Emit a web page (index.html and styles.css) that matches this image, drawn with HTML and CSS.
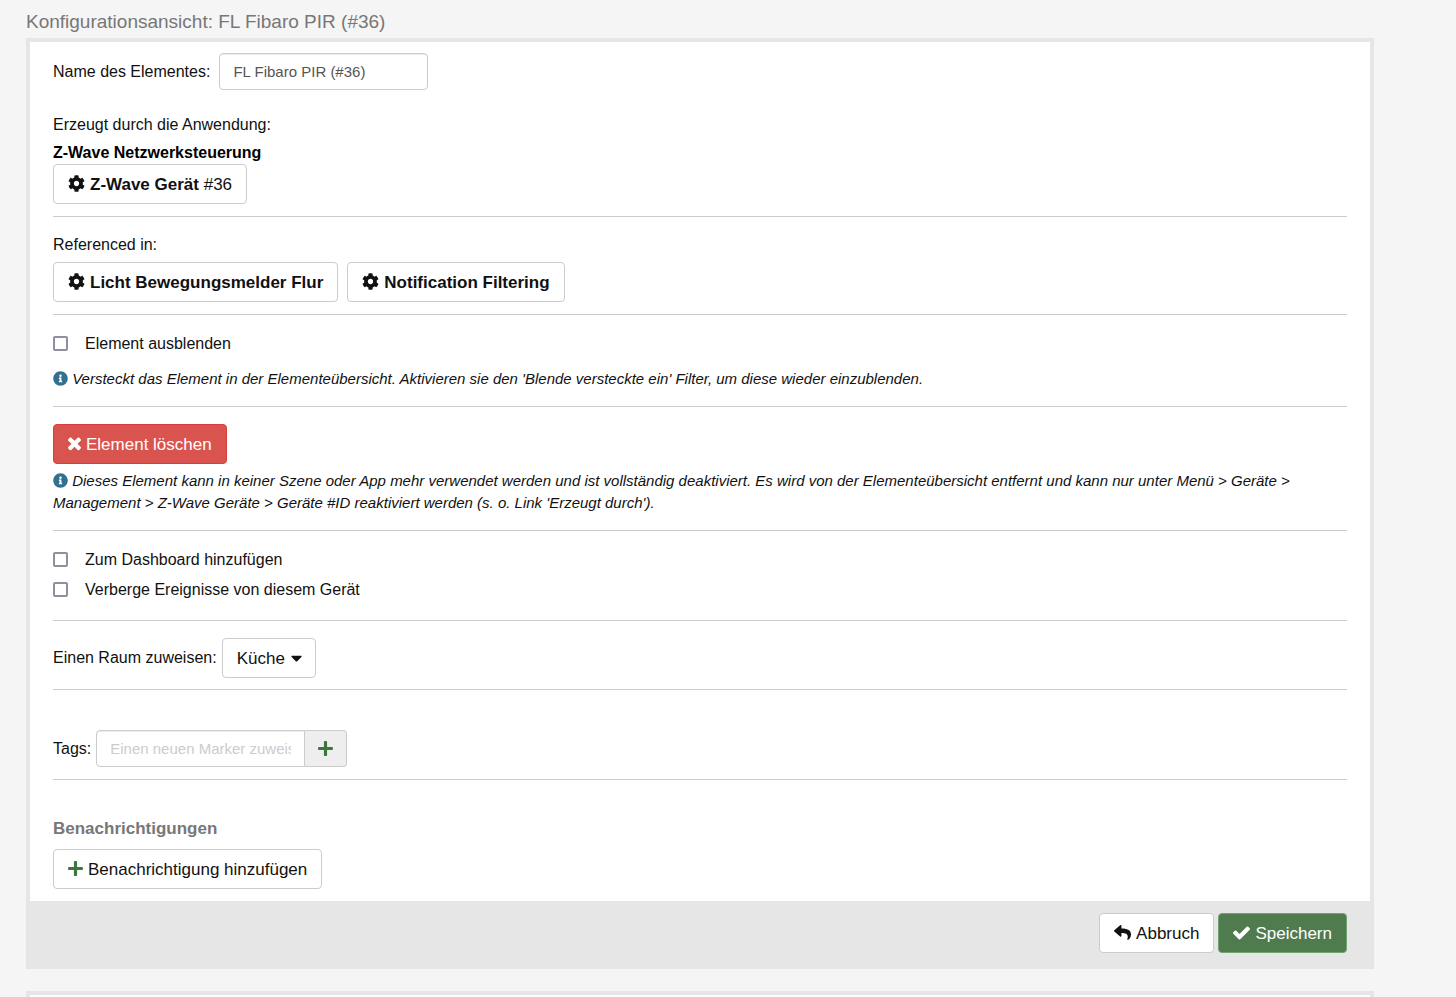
FILE: index.html
```html
<!DOCTYPE html>
<html lang="de">
<head>
    <meta charset="UTF-8">
    <meta name="viewport" content="width=device-width, initial-scale=1.0">
    <title>Konfigurationsansicht</title>
    <link rel="stylesheet" href="styles.css">
</head>
<body>
    <svg class="sprite" aria-hidden="true">
        <symbol id="cog" viewBox="0 0 512 512"><path d="M487.4 315.7l-42.6-24.6c4.3-23.2 4.3-47 0-70.2l42.6-24.6c4.9-2.8 7.1-8.6 5.5-14-11.1-35.6-30-67.8-54.7-94.6-3.8-4.1-10-5.1-14.8-2.3L380.8 110c-17.9-15.4-38.5-27.3-60.8-35.1V25.8c0-5.6-3.9-10.5-9.4-11.7-36.7-8.2-74.3-7.8-109.2 0-5.5 1.2-9.4 6.1-9.4 11.7V75c-22.2 7.9-42.8 19.8-60.8 35.1L88.7 85.5c-4.9-2.8-11-1.9-14.8 2.3-24.7 26.7-43.6 58.9-54.7 94.6-1.7 5.4.6 11.2 5.5 14L67.3 221c-4.3 23.2-4.3 47 0 70.2l-42.6 24.6c-4.9 2.8-7.1 8.6-5.5 14 11.1 35.6 30 67.8 54.7 94.6 3.8 4.1 10 5.1 14.8 2.3l42.6-24.6c17.9 15.4 38.5 27.3 60.8 35.1v49.2c0 5.6 3.9 10.5 9.4 11.7 36.7 8.2 74.3 7.8 109.2 0 5.5-1.2 9.4-6.1 9.4-11.7v-49.2c22.2-7.9 42.8-19.8 60.8-35.1l42.6 24.6c4.9 2.8 11 1.9 14.8-2.3 24.7-26.7 43.6-58.9 54.7-94.6 1.5-5.5-.7-11.3-5.6-14.1zM256 336c-44.1 0-80-35.9-80-80s35.9-80 80-80 80 35.9 80 80-35.9 80-80 80z"/></symbol>
        <symbol id="times" viewBox="302 302 1188 1252"><path d="M1490 1322q0 40-28 68l-136 136q-28 28-68 28t-68-28l-294-294-294 294q-28 28-68 28t-68-28l-136-136q-28-28-28-68t28-68l294-294-294-294q-28-28-28-68t28-68l136-136q28-28 68-28t68 28l294 294 294-294q28-28 68-28t68 28l136 136q28 28 28 68t-28 68l-294 294 294 294q28 28 28 68z"/></symbol>
        <symbol id="plus" viewBox="0 0 448 512"><path d="M416 208H272V64c0-17.67-14.33-32-32-32h-32c-17.67 0-32 14.33-32 32v144H32c-17.67 0-32 14.33-32 32v32c0 17.67 14.33 32 32 32h144v144c0 17.67 14.33 32 32 32h32c17.67 0 32-14.33 32-32V304h144c17.67 0 32-14.33 32-32v-32c0-17.67-14.33-32-32-32z"/></symbol>
        <symbol id="check" viewBox="121 110 1550 1550"><path d="M1671 566q0 40-28 68l-724 724-136 136q-28 28-68 28t-68-28l-136-136-362-362q-28-28-28-68t28-68l136-136q28-28 68-28t68 28l294 295 656-657q28-28 68-28t68 28l136 136q28 28 28 68z"/></symbol>
        <symbol id="info" viewBox="0 0 512 512"><path d="M256 8C119.043 8 8 119.083 8 256c0 136.997 111.043 248 248 248s248-111.003 248-248C504 119.083 392.957 8 256 8zm0 110c23.196 0 42 18.804 42 42s-18.804 42-42 42-42-18.804-42-42 18.804-42 42-42zm56 254c0 6.627-5.373 12-12 12h-88c-6.627 0-12-5.373-12-12v-24c0-6.627 5.373-12 12-12h12v-64h-12c-6.627 0-12-5.373-12-12v-24c0-6.627 5.373-12 12-12h64c6.627 0 12 5.373 12 12v100h12c6.627 0 12 5.373 12 12v24z"/></symbol>
        <symbol id="reply" viewBox="0 0 512 512"><path d="M8.309 189.836L184.313 37.851C199.719 24.546 224 35.347 224 56.015v80.053c160.629 1.839 288 34.032 288 186.258 0 61.441-39.581 122.309-83.333 154.132-13.653 9.931-33.111-2.533-28.077-18.631 45.344-145.012-21.507-183.51-176.59-185.742V360c0 20.7-24.3 31.453-39.687 18.164l-176.004-152c-11.071-9.562-11.086-26.753 0-36.328z"/></symbol>
        <symbol id="caret" viewBox="0 0 320 512"><path d="M31.3 192h257.3c17.8 0 26.7 21.5 14.1 34.1L174.1 354.8c-7.8 7.8-20.5 7.8-28.3 0L17.2 226.1C4.6 213.5 13.5 192 31.3 192z"/></symbol>
    </svg>

    <main class="page">
        <h1>Konfigurationsansicht: FL Fibaro PIR (#36)</h1>
        <form class="panel">
            <div class="panel-body">
                <section class="group group-first">
                    <div class="field field-name">
                        <label for="elementName">Name des Elementes:</label>
                        <input type="text" class="text-input" id="elementName" value="FL Fibaro PIR (#36)">
                    </div>
                    <p class="created-by">Erzeugt durch die Anwendung:</p>
                    <p class="app-name">Z-Wave Netzwerksteuerung</p>
                    <button type="button" class="btn"><svg class="icon"><use href="#cog"/></svg><span><b>Z-Wave Gerät</b> #36</span></button>
                </section>

                <section class="group">
                    <p class="referenced">Referenced in:</p>
                    <div class="btn-row">
                        <button type="button" class="btn"><svg class="icon"><use href="#cog"/></svg><b>Licht Bewegungsmelder Flur</b></button>
                        <button type="button" class="btn"><svg class="icon"><use href="#cog"/></svg><b>Notification Filtering</b></button>
                    </div>
                </section>

                <section class="group group-hide">
                    <label class="check"><input type="checkbox">Element ausblenden</label>
                    <p class="help help-check"><svg class="icon-info"><use href="#info"/></svg> Versteckt das Element in der Elementeübersicht. Aktivieren sie den 'Blende versteckte ein' Filter, um diese wieder einzublenden.</p>
                </section>

                <section class="group group-delete">
                    <button type="button" class="btn btn-danger"><svg class="icon icon-times"><use href="#times"/></svg>Element löschen</button>
                    <p class="help"><svg class="icon-info"><use href="#info"/></svg> Dieses Element kann in keiner Szene oder App mehr verwendet werden und ist vollständig deaktiviert. Es wird von der Elementeübersicht entfernt und kann nur unter Menü &gt; Geräte &gt; Management &gt; Z-Wave Geräte &gt; Geräte #ID reaktiviert werden (s. o. Link 'Erzeugt durch').</p>
                </section>

                <section class="group group-options">
                    <label class="check"><input type="checkbox">Zum Dashboard hinzufügen</label>
                    <label class="check"><input type="checkbox">Verberge Ereignisse von diesem Gerät</label>
                </section>

                <section class="group group-room">
                    <div class="field">
                        <label for="room">Einen Raum zuweisen:</label>
                        <span class="select">
                            <select id="room">
                                <option>Küche</option>
                            </select>
                            <svg class="select-caret"><use href="#caret"/></svg>
                        </span>
                    </div>
                </section>

                <section class="group group-spaced">
                    <div class="field">
                        <label for="tag">Tags:</label>
                        <div class="input-group">
                            <input type="text" class="text-input" id="tag" placeholder="Einen neuen Marker zuweisen">
                            <button type="button" class="addon" aria-label="Marker hinzufügen"><svg class="icon icon-plus"><use href="#plus"/></svg></button>
                        </div>
                    </div>
                </section>

                <section class="group group-spaced">
                    <h2>Benachrichtigungen</h2>
                    <button type="button" class="btn"><svg class="icon icon-plus"><use href="#plus"/></svg>Benachrichtigung hinzufügen</button>
                </section>
            </div>
            <div class="panel-footer">
                <button type="button" class="btn"><svg class="icon"><use href="#reply"/></svg>Abbruch</button>
                <button type="submit" class="btn btn-success"><svg class="icon"><use href="#check"/></svg>Speichern</button>
            </div>
        </form>
        <div class="panel panel-next"></div>
    </main>
</body>
</html>
```
FILE: styles.css
```css
* {
    box-sizing: border-box;
}
body {
    margin: 0;
    background-color: #f5f5f5;
    color: #111;
    font-family: Arial, "Liberation Sans", sans-serif;
    font-size: 16px;
    line-height: 22px;
}
p, h1, h2 {
    margin: 0;
}
.sprite {
    display: none;
}
.page {
    padding: 10px 82px 0 26px;
}
h1 {
    margin-bottom: 4px;
    color: #777;
    font-size: 19px;
    font-weight: normal;
    line-height: 24px;
}
h2 {
    margin-bottom: 11px;
    color: #777;
    font-size: 17px;
    line-height: 18px;
}
.panel {
    background-color: #fff;
    border: 4px solid #e6e6e6;
}
.panel-body {
    padding: 0 23px;
}
.panel-footer {
    display: flex;
    justify-content: flex-end;
    gap: 4px;
    padding: 12px 23px;
    background-color: #e6e6e6;
}
.panel-next {
    min-height: 6px;
    margin-top: 22px;
    border-bottom: none;
}

/* groups */
.group {
    padding: 17px 0 12px;
    border-bottom: 1px solid #ccc;
}
.group:last-child {
    border-bottom: none;
}
.group-first {
    padding-top: 11px;
}
.group-hide {
    padding: 14px 0 16px;
}
.group-delete {
    padding-bottom: 16px;
}
.group-options {
    padding: 14px 0 17px;
}
.group-room {
    padding-bottom: 11px;
}
.group-spaced {
    padding-top: 40px;
}
.created-by {
    margin: 24px 0 6px;
}
.app-name {
    color: #000;
    font-weight: bold;
}
.referenced {
    margin-bottom: 6px;
}

/* form controls */
.field {
    display: flex;
    align-items: center;
    gap: 5px;
}
.field-name {
    gap: 9px;
}
.text-input {
    width: 209px;
    height: 37px;
    padding: 0 13px;
    border: 1px solid #ccc;
    border-radius: 4px;
    box-shadow: inset 0 1px 1px rgba(0, 0, 0, 0.075);
    background-color: #fff;
    color: #555;
    font-family: inherit;
    font-size: 15px;
}
.text-input::placeholder {
    color: #ccc;
}
.input-group {
    display: flex;
}
.input-group .text-input {
    border-radius: 4px 0 0 4px;
}
.addon {
    display: flex;
    align-items: center;
    justify-content: center;
    width: 42px;
    padding: 0;
    background-color: #eee;
    border: 1px solid #ccc;
    border-left: none;
    border-radius: 0 4px 4px 0;
    cursor: pointer;
}
.btn-row {
    display: flex;
    gap: 9px;
}
.btn {
    display: inline-flex;
    align-items: center;
    gap: 5px;
    height: 40px;
    padding: 2px 14px 0;
    background-color: #fff;
    border: 1px solid #ccc;
    border-radius: 4px;
    color: #111;
    font-family: inherit;
    font-size: 17px;
    cursor: pointer;
    vertical-align: top;
}
.btn-danger {
    background-color: #d9534f;
    border-color: #d43f3a;
    color: #fff;
}
.btn-success {
    background-color: #4f7b4f;
    border-color: #6fa56f;
    color: #fff;
}
.select {
    position: relative;
}
select {
    display: block;
    height: 40px;
    padding: 0 29px 0 14px;
    appearance: none;
    background-color: #fff;
    border: 1px solid #ccc;
    border-radius: 4px;
    color: #111;
    font-family: inherit;
    font-size: 17px;
}
.select-caret {
    position: absolute;
    top: 11px;
    right: 14px;
    width: 11px;
    height: 18px;
    fill: #111;
    pointer-events: none;
}
.check {
    display: flex;
    align-items: center;
    height: 28px;
    padding-top: 2px;
}
.check + .check {
    margin-top: 2px;
}
.check input {
    appearance: none;
    width: 15px;
    height: 15px;
    margin: 0 17px 2px 0;
    background-color: #fff;
    border: 2px solid #8f8f9d;
    border-radius: 2px;
}
.check input:checked {
    background-color: #4f7b4f;
}
.help {
    margin-top: 6px;
    font-size: 15px;
    font-style: italic;
    line-height: 22px;
}
.help-check {
    margin-top: 11px;
}

/* icons */
.icon {
    width: 17px;
    height: 17px;
    fill: currentColor;
}
.btn .icon {
    margin-bottom: 3px;
}
.icon-times {
    width: 13px;
}
.icon-plus {
    width: 15px;
    fill: #3c763d;
}
.icon-info {
    width: 15px;
    height: 15px;
    fill: #31708f;
    vertical-align: -2px;
}
```
